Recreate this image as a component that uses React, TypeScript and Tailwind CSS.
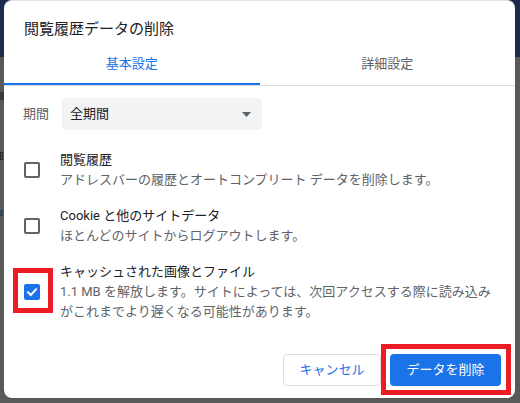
import React from "react";

function Box({ checked }: { checked?: boolean }) {
  if (checked) {
    return (
      <div className="w-[16px] h-[16px] shrink-0 rounded-[2px] bg-[#1a73e8] flex items-center justify-center">
        <svg width="12" height="12" viewBox="0 0 12 12">
          <path d="M2 6.3 L4.8 9 L10 3.3" fill="none" stroke="#fff" strokeWidth="2" strokeLinecap="square" />
        </svg>
      </div>
    );
  }
  return <div className="w-[16px] h-[16px] shrink-0 rounded-[2px] border-2 border-[#5f6368]" />;
}

function Row({ checked, title, children }: { checked?: boolean; title: string; children: React.ReactNode }) {
  return (
    <div className="flex items-center">
      <Box checked={checked} />
      <div className="ml-[20px] text-[13px] leading-[20px]">
        <div className="text-[#202124]">{title}</div>
        <div className="text-[#5f6368]">{children}</div>
      </div>
    </div>
  );
}

export default function App() {
  return (
    <div className="relative w-[520px] h-[403px] bg-[#595959] overflow-hidden font-[Roboto,'Noto_Sans_CJK_JP',sans-serif]">
      <div className="h-[57px] bg-[#1b2a4e]" />
      <div className="absolute left-0 top-[92px] w-[4px] h-[8px] bg-[#3a3a3a]" />
      <div className="absolute left-0 top-[152px] w-[3px] h-[8px] border border-[#2a2a2a]" />
      <div className="absolute left-0 top-[210px] w-[3px] h-[6px] bg-[#334455]" />

      <div className="absolute left-[4px] top-0 w-[511px] h-[398px] bg-white rounded-[8px] border-t border-[#e3e3e3] flex flex-col">
        <h1 className="pl-[20px] pt-[18px] text-[15px] leading-[20px] text-[#202124]">閲覧履歴データの削除</h1>

        <div className="mt-[5px] flex border-b border-[#dadce0]">
          <div className="flex-1 h-[41px] flex items-center justify-center text-[13px] text-[#1a73e8] border-b-2 border-[#1a73e8]">
            基本設定
          </div>
          <div className="flex-1 h-[41px] flex items-center justify-center text-[13px] text-[#5f6368] border-b-2 border-transparent">
            詳細設定
          </div>
        </div>

        <div className="mt-[12px] pl-[19px] flex items-center">
          <div className="w-[39px] text-[13px] text-[#5f6368]">期間</div>
          <div className="w-[200px] h-[32px] bg-[#f1f3f4] rounded-[4px] pl-[8px] pr-[11px] flex items-center justify-between">
            <span className="text-[13px] text-[#202124]">全期間</span>
            <svg width="9" height="5" viewBox="0 0 9 5">
              <path d="M0 0 L9 0 L4.5 5 Z" fill="#5f6368" />
            </svg>
          </div>
        </div>

        <div className="mt-[20px] px-[20px] flex flex-col gap-[16px]">
          <Row title="閲覧履歴">アドレスバーの履歴とオートコンプリート データを削除します。</Row>
          <Row title="Cookie と他のサイトデータ">ほとんどのサイトからログアウトします。</Row>
          <Row checked title="キャッシュされた画像とファイル">
            1.1 MB を解放します。サイトによっては、次回アクセスする際に読み込み
            <br />
            がこれまでより遅くなる可能性があります。
          </Row>
        </div>

        <div className="mt-auto pb-[12px] pr-[14px] flex justify-end gap-[9px]">
          <button className="w-[98px] h-[32px] rounded-[4px] border border-[#dadce0] bg-white text-[13px] text-[#1a73e8]">
            キャンセル
          </button>
          <button className="w-[111px] h-[32px] rounded-[4px] bg-[#1a73e8] text-[13px] text-white">
            データを削除
          </button>
        </div>
      </div>

      <div className="absolute left-[13px] top-[268px] w-[40px] h-[45px] border-[5px] border-[#ed1c24]" />
      <div className="absolute left-[381px] top-[344px] w-[130px] h-[51px] border-[5px] border-[#ed1c24]" />
    </div>
  );
}
